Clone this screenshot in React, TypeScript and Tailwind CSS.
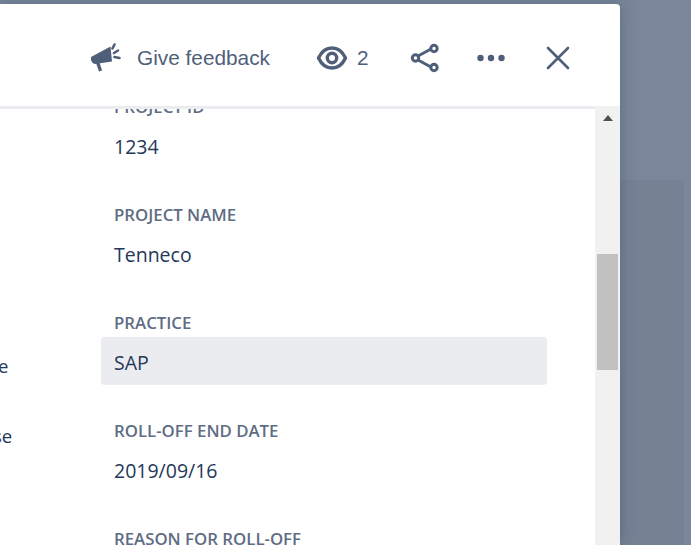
const fields = [
  { label: "PROJECT ID", value: "1234" },
  { label: "PROJECT NAME", value: "Tenneco" },
  { label: "PRACTICE", value: "SAP", active: true },
  { label: "ROLL-OFF END DATE", value: "2019/09/16" },
  { label: "REASON FOR ROLL-OFF", value: "" },
];

const ui = { fontFamily: '"Open Sans", "Noto Sans", sans-serif' };

export default function App() {
  return (
    <div className="flex h-[545px] w-[691px] overflow-hidden bg-[#7a8699]">
      <div className="relative z-10 mt-1 flex h-[541px] w-[620px] shrink-0 flex-col rounded-tr-[4px] bg-white shadow-[0_0_16px_rgba(9,30,66,0.25)]">
        <header className="flex h-[102px] shrink-0 items-center pt-[6px] text-[#505f79]" style={{ fontFamily: '"Liberation Sans", Arial, sans-serif' }}>
          <svg className="ml-[91px] h-[30px] w-[30px]" viewBox="0 0 30 30" fill="#505f79">
            <path d="M0 14 L19.500 3.500 L21 18.500 L4 21 Q1 20.500 0 17 Z" />
            <path d="M5 20 L8.500 19.500 L11 27.500 L8 28.500 Z" />
            <path d="M21.500 5.500 L23.500 1.500" stroke="#505f79" strokeWidth="2.600" strokeLinecap="round" />
            <path d="M23 10 L27 7.500" stroke="#505f79" strokeWidth="2.600" strokeLinecap="round" />
            <path d="M23.500 14 L28.500 15" stroke="#505f79" strokeWidth="2.600" strokeLinecap="round" />
          </svg>
          <span className="ml-[16px] text-[20.8px] leading-none">Give feedback</span>
          <svg className="ml-[46px] h-[24px] w-[32px]" viewBox="0 0 32 24" fill="none" stroke="#505f79" strokeWidth="3.400">
            <path d="M2.500 12 C6 4.500 10.500 2 16 2 C21.500 2 26 4.500 29.500 12 C26 19.500 21.500 22 16 22 C10.500 22 6 19.500 2.500 12 Z" />
            <circle cx="16" cy="12" r="4.700" />
          </svg>
          <span className="ml-[9px] text-[20.8px] leading-none">2</span>
          <svg className="ml-[41px] h-[30px] w-[30px]" viewBox="0 0 30 30" fill="none" stroke="#505f79" strokeWidth="3">
            <path d="M8 13 L21 6 M8 17 L21 24" />
            <circle cx="5.500" cy="15" r="3.200" />
            <circle cx="24" cy="5.500" r="3.200" />
            <circle cx="24" cy="24.500" r="3.200" />
          </svg>
          <svg className="ml-[36px] h-[8px] w-[30px]" viewBox="0 0 30 8" fill="#505f79">
            <circle cx="4.500" cy="4" r="3.200" />
            <circle cx="15" cy="4" r="3.200" />
            <circle cx="25.500" cy="4" r="3.200" />
          </svg>
          <svg className="ml-[40px] h-[24px] w-[24px]" viewBox="0 0 24 24" stroke="#505f79" strokeWidth="2.600" strokeLinecap="round">
            <path d="M2 2 L22 22 M22 2 L2 22" />
          </svg>
        </header>
        <div className="flex min-h-0 flex-1 border-t-[3px] border-[#ebecf0]">
          <main className="flex min-w-0 flex-1 overflow-hidden text-[#253858]" style={ui}>
            <div className="flex w-[101px] shrink-0 flex-col overflow-hidden pt-[245px] text-[18.500px] leading-[24px]">
              <span className="-ml-[2px]">e</span>
              <span className="mt-[46px] -ml-[7px]">se</span>
            </div>
            <div className="-mt-[14px] w-[446px] shrink-0">
              {fields.map((f) => (
                <section key={f.label} className="pb-[34px]">
                  <h3 className="h-[24px] px-[13px] text-[16.800px] leading-[24px] font-semibold text-[#5e6c84]">{f.label}</h3>
                  <div className={`mt-[2px] h-[48px] rounded-[4px] px-[13px] text-[19.500px] leading-[52px] ${f.active ? "bg-[#ebecf0]" : ""}`}>{f.value}</div>
                </section>
              ))}
            </div>
          </main>
          <div className="-mt-[3px] flex w-[25px] shrink-0 flex-col items-center bg-[#f1f1f1]">
            <div className="mt-[9px] h-0 w-0 border-x-[5px] border-b-[6px] border-x-transparent border-b-[#505050]" />
            <div className="mt-[133px] h-[116px] w-[21px] bg-[#c1c1c1]" />
          </div>
        </div>
      </div>
      <div className="mt-[180px] mr-[7px] h-full flex-1 rounded-tr-[8px] bg-[#768294]" />
    </div>
  );
}
